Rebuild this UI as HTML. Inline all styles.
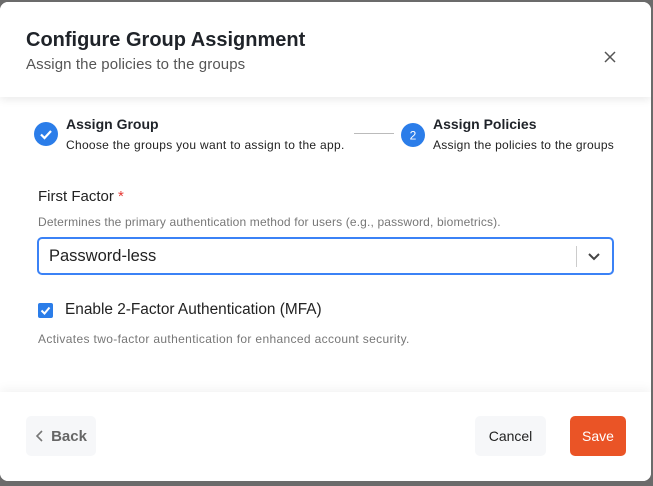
<!DOCTYPE html>
<html><head><style>
*{box-sizing:border-box;margin:0;padding:0}
body{width:653px;height:486px;background:#6b6b6b;font-family:"Liberation Sans",sans-serif;position:relative;overflow:hidden}
.dlg{position:absolute;left:0;top:2px;width:651px;height:479px;background:#fff;border-radius:8px;overflow:hidden}
.hdr{position:absolute;left:0;top:0;width:651px;height:95px;background:#fff;box-shadow:0 3px 8px rgba(0,0,0,.08)}
.t{position:absolute;left:26px;top:27px;font-size:20px;font-weight:bold;color:#1f2329}
.st{position:absolute;left:26px;top:54px;font-size:15px;color:#555;letter-spacing:0.1px}
.x{position:absolute;left:603px;top:48px}
.abs{position:absolute;white-space:nowrap}
.ftr{position:absolute;left:0;top:390px;width:651px;height:89px;background:#fff;box-shadow:0 -3px 10px rgba(0,0,0,.05)}
.btn{position:absolute;border-radius:5px;font-size:14px;display:flex;align-items:center;justify-content:center}
</style></head><body>
<div class="dlg">
<div class="hdr">
<div class="t">Configure Group Assignment</div>
<div class="st">Assign the policies to the groups</div>
<svg class="x" width="14" height="14" viewBox="0 0 14 14"><path d="M2 2L12 12M12 2L2 12" stroke="#555" stroke-width="1.5"/></svg>
</div>
<svg class="abs" style="left:34px;top:120px" width="24" height="24"><circle cx="12" cy="12" r="12" fill="#2b7de9"/><path d="M7 12.5l3.5 3.5L17 9" stroke="#fff" stroke-width="2.2" fill="none"/></svg>
<div class="abs" style="left:66px;top:114px;font-size:14px;font-weight:bold;color:#1f2329">Assign Group</div>
<div class="abs" style="left:66px;top:136px;font-size:12px;color:#222;letter-spacing:0.3px">Choose the groups you want to assign to the app.</div>
<div class="abs" style="left:354px;top:131px;width:40px;height:1px;background:#bbb"></div>
<svg class="abs" style="left:401px;top:121px" width="24" height="24"><circle cx="12" cy="12" r="12" fill="#2b7de9"/><text x="12" y="16.5" text-anchor="middle" font-size="12" fill="#fff" font-family="Liberation Sans">2</text></svg>
<div class="abs" style="left:433px;top:114px;font-size:14px;font-weight:bold;color:#1f2329">Assign Policies</div>
<div class="abs" style="left:433px;top:136px;font-size:12px;color:#222;letter-spacing:0.25px">Assign the policies to the groups</div>
<div class="abs" style="left:38px;top:186px;font-size:15px;color:#222">First Factor <span style="color:#e53935">*</span></div>
<div class="abs" style="left:38px;top:213px;font-size:12px;color:#777;letter-spacing:0.15px">Determines the primary authentication method for users (e.g., password, biometrics).</div>
<div class="abs" style="left:37px;top:235px;width:577px;height:38px;border:2px solid #3b82f6;border-radius:5px"></div>
<div class="abs" style="left:49px;top:245px;font-size:16.5px;color:#222">Password-less</div>
<div class="abs" style="left:576px;top:244px;width:1px;height:21px;background:#ccc"></div>
<svg class="abs" style="left:587px;top:250px" width="14" height="10"><path d="M2 2l5 5 5-5" stroke="#444" stroke-width="2" fill="none"/></svg>
<svg class="abs" style="left:38px;top:301px" width="15" height="15"><rect width="15" height="15" rx="2" fill="#2b7de9"/><path d="M3.5 7.5l3 3 5-6" stroke="#fff" stroke-width="2" fill="none"/></svg>
<div class="abs" style="left:65px;top:299px;font-size:15.4px;color:#222">Enable 2-Factor Authentication (MFA)</div>
<div class="abs" style="left:38px;top:330px;font-size:12px;color:#777;letter-spacing:0.35px">Activates two-factor authentication for enhanced account security.</div>
<div class="ftr">
<div class="btn" style="left:26px;top:24px;width:70px;height:40px;background:#f6f7f9;color:#666;font-size:15px;font-weight:bold"><svg width="10" height="14" style="margin-right:6px"><path d="M7 2L2 7l5 5" stroke="#777" stroke-width="1.6" fill="none"/></svg>Back</div>
<div class="btn" style="left:475px;top:24px;width:71px;height:40px;background:#f6f7f9;color:#222">Cancel</div>
<div class="btn" style="left:570px;top:24px;width:56px;height:40px;background:#ea5426;color:#fff">Save</div>
</div>
</div>
</body></html>
